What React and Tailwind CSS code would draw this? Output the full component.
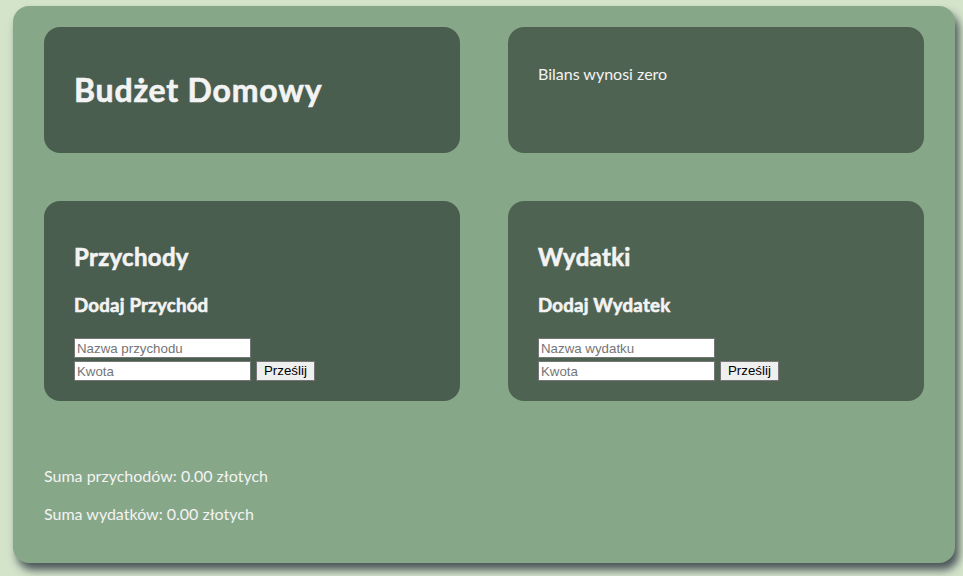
import React from 'react';

const font = { fontFamily: 'Lato, "Open Sans", sans-serif' };

// ─── Formularz dodawania pozycji ────────────────────────────────
function EntryForm({ namePlaceholder }) {
  return (
    <form className="flex flex-col gap-[3px] pt-px" onSubmit={(e) => e.preventDefault()}>
      <input
        type="text"
        placeholder={namePlaceholder}
        className="w-[177px] h-[20px] bg-white border border-[#767676] px-[2px] text-[13.3px] text-black placeholder:text-[#757575] [font-family:Arial,'Liberation_Sans',sans-serif]"
      />
      <div className="flex items-center gap-[5px]">
        <input
          type="number"
          placeholder="Kwota"
          className="w-[177px] h-[20px] bg-white border border-[#767676] px-[2px] text-[13.3px] text-black placeholder:text-[#757575] [font-family:Arial,'Liberation_Sans',sans-serif]"
        />
        <button
          type="submit"
          className="h-[20px] px-[7px] bg-[#efefef] border border-[#767676] text-[13.3px] text-black leading-none [font-family:Arial,'Liberation_Sans',sans-serif]"
        >
          Prześlij
        </button>
      </div>
    </form>
  );
}

function Card({ tone = 'bg-[#4a5e4f]', children }) {
  return <div className={`${tone} rounded-[16px] px-[30px] py-[20px]`}>{children}</div>;
}

const heading = '[-webkit-text-stroke:0.6px_#f3f3f3]';

export default function App() {
  return (
    <div className="min-h-screen bg-[#d3e4cb] pt-[6px] pl-[13px] pr-[8px] pb-[13px]" style={font}>
      <div className="bg-[#87a789] rounded-[16px] shadow-[4px_7px_9px_rgba(40,50,60,0.8)] px-[31px] pt-[21px] pb-[38px] text-[#f3f3f3]">
        <div className="grid grid-cols-2 gap-[48px]">
          <Card>
            <h1 className={`text-[32px] font-bold leading-[44px] my-[21px] tracking-[0.8px] ${heading}`}>Budżet Domowy</h1>
          </Card>
          <Card tone="bg-[#4f6352]">
            <p className="text-[16px] leading-[22px] my-[16px]">Bilans wynosi zero</p>
          </Card>
          <Card>
            <h2 className={`text-[24px] font-bold leading-[32px] mt-[20px] tracking-[0.3px] ${heading}`}>Przychody</h2>
            <h3 className={`text-[18.7px] font-bold leading-[25px] mt-[20px] mb-[19px] tracking-[0.2px] ${heading}`}>Dodaj Przychód</h3>
            <EntryForm namePlaceholder="Nazwa przychodu" />
          </Card>
          <Card tone="bg-[#4f6352]">
            <h2 className={`text-[24px] font-bold leading-[32px] mt-[20px] tracking-[0.3px] ${heading}`}>Wydatki</h2>
            <h3 className={`text-[18.7px] font-bold leading-[25px] mt-[20px] mb-[19px] tracking-[0.2px] ${heading}`}>Dodaj Wydatek</h3>
            <EntryForm namePlaceholder="Nazwa wydatku" />
          </Card>
        </div>
        <div className="mt-[64px] text-[16px] leading-[22px]">
          <p>Suma przychodów: 0.00 złotych</p>
          <p className="mt-[16px]">Suma wydatków: 0.00 złotych</p>
        </div>
      </div>
    </div>
  );
}
